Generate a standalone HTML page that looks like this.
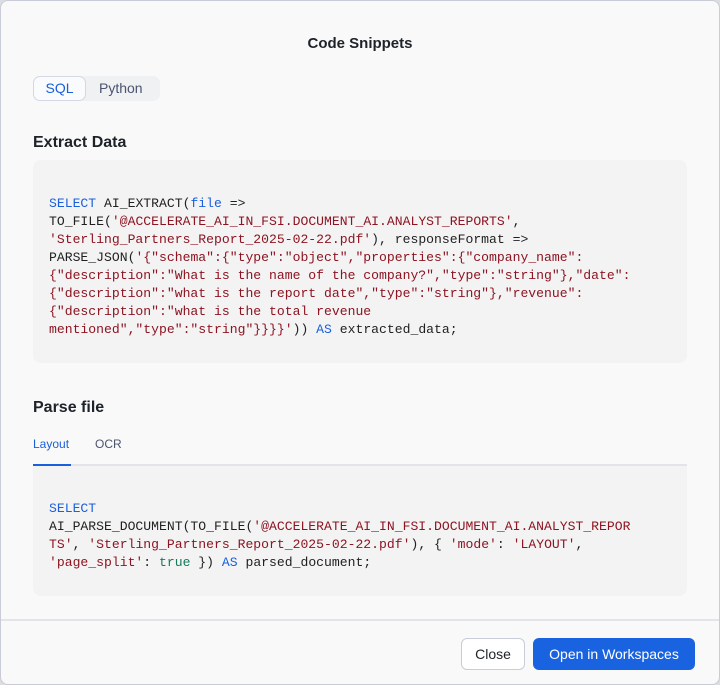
<!DOCTYPE html>
<html><head><style>
html,body{margin:0;padding:0;width:720px;height:685px;overflow:hidden;background:#dcdde3;}
.m{position:absolute;left:0;top:0;width:718px;height:683px;background:#f9f9fa;border:1px solid #c9ccd6;border-radius:8px;font-family:"Liberation Sans",sans-serif;color:#1e2229;}
.t{position:absolute;top:34px;left:0;right:0;text-align:center;font-size:15px;font-weight:bold;}
.seg{position:absolute;left:32px;top:75px;width:127px;height:25px;background:#f0f1f3;border-radius:7px;}
.sql{position:absolute;left:0;top:0;width:51px;height:23px;border:1px solid #d3d8e4;border-radius:7px;background:#fafbfc;color:#1a5fdb;font-size:14px;text-align:center;line-height:23px;}
.py{position:absolute;left:66px;top:0;line-height:25px;font-size:14px;color:#4a5470;}
h2{position:absolute;margin:0;font-size:16px;font-weight:bold;left:32px;}
pre{margin:0;font-family:"Liberation Mono",monospace;font-size:13.1px;line-height:18px;color:#1f1f1f;position:absolute;left:16px;}
.cb{position:absolute;left:32px;width:654px;background:#f3f3f4;border-radius:8px;}
.k{color:#1a5fdb}.s{color:#8d1421}.g{color:#16795a}
.tabs{position:absolute;left:32px;top:430px;width:654px;height:33px;border-bottom:2px solid #e3e4e8;font-size:12px;}
.tabs span{position:absolute;top:6px;}
.btn{position:absolute;top:637px;height:30px;border-radius:6px;font-size:14px;line-height:30px;text-align:center;}
</style></head><body>
<div class="m">
<div class="t">Code Snippets</div>
<div class="seg"><div class="sql">SQL</div><div class="py">Python</div></div>
<h2 style="top:133px">Extract Data</h2>
<div class="cb" style="top:159px;height:203px"><pre style="top:35px"><span class="k">SELECT</span> AI_EXTRACT(<span class="k">file</span> =&gt;
TO_FILE(<span class="s">'@ACCELERATE_AI_IN_FSI.DOCUMENT_AI.ANALYST_REPORTS'</span>,
<span class="s">'Sterling_Partners_Report_2025-02-22.pdf'</span>), responseFormat =&gt;
PARSE_JSON(<span class="s">'{"schema":{"type":"object","properties":{"company_name":
{"description":"What is the name of the company?","type":"string"},"date":
{"description":"what is the report date","type":"string"},"revenue":
{"description":"what is the total revenue
mentioned","type":"string"}}}}'</span>)) <span class="k">AS</span> extracted_data;</pre></div>
<h2 style="top:398px">Parse file</h2>
<div class="tabs"><span style="left:0;color:#1a5fdb">Layout</span><span style="left:62px;color:#4a5470">OCR</span><div style="position:absolute;left:0;bottom:-2px;width:38px;height:2px;background:#1a5fdb"></div></div>
<div class="cb" style="top:465px;height:130px;border-radius:0 0 8px 8px"><pre style="top:34px"><span class="k">SELECT</span>
AI_PARSE_DOCUMENT(TO_FILE(<span class="s">'@ACCELERATE_AI_IN_FSI.DOCUMENT_AI.ANALYST_REPOR
TS'</span>, <span class="s">'Sterling_Partners_Report_2025-02-22.pdf'</span>), { <span class="s">'mode'</span>: <span class="s">'LAYOUT'</span>,
<span class="s">'page_split'</span>: <span class="g">true</span> }) <span class="k">AS</span> parsed_document;</pre></div>
<div style="position:absolute;left:0;right:0;top:618px;height:2px;background:#e3e4e8"></div>
<div class="btn" style="left:460px;width:62px;border:1px solid #c7cdd9;background:#fff;">Close</div>
<div class="btn" style="left:532px;width:162px;height:32px;line-height:32px;background:#1a63e0;color:#fff;">Open in Workspaces</div>
</div>
</body></html>
